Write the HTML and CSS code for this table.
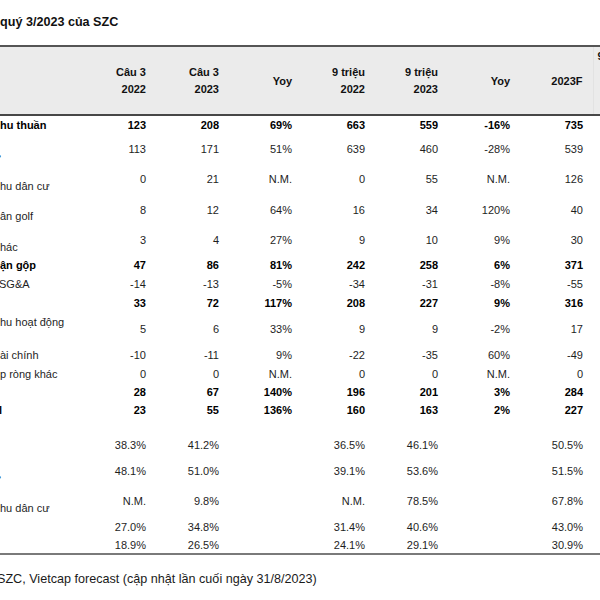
FILE: index.html
```html
<!DOCTYPE html>
<html lang="vi">
<head>
<meta charset="utf-8">
<title>SZC</title>
<link rel="stylesheet" href="styles.css">
</head>
<body>
<div class="page">
  <div class="title">quý 3/2023 của SZC</div>
  <table class="fin">
    <colgroup>
      <col class="c-label"><col class="c-num"><col class="c-num"><col class="c-num"><col class="c-num"><col class="c-num"><col class="c-num6"><col class="c-num"><col class="c-extra">
    </colgroup>
    <thead>
      <tr class="head">
        <th class="lbl"></th>
        <th>Câu 3<br>2022</th>
        <th>Câu 3<br>2023</th>
        <th>Yoy</th>
        <th>9 triệu<br>2022</th>
        <th>9 triệu<br>2023</th>
        <th>Yoy</th>
        <th>2023F</th>
        <th class="extra">9T2023</th>
      </tr>
    </thead>
    <tbody>
      <tr class="h20 b"><td class="lbl">hu thuần</td><td>123</td><td>208</td><td>69%</td><td>663</td><td>559</td><td>-16%</td><td>735</td><td></td></tr>
      <tr class="h29"><td class="lbl low"><span class="tail">•</span></td><td>113</td><td>171</td><td>51%</td><td>639</td><td>460</td><td>-28%</td><td>539</td><td></td></tr>
      <tr class="h31"><td class="lbl low">hu dân cư</td><td>0</td><td>21</td><td>N.M.</td><td>0</td><td>55</td><td>N.M.</td><td>126</td><td></td></tr>
      <tr class="h30"><td class="lbl low">ân golf</td><td>8</td><td>12</td><td>64%</td><td>16</td><td>34</td><td>120%</td><td>40</td><td></td></tr>
      <tr class="h31"><td class="lbl low">hác</td><td>3</td><td>4</td><td>27%</td><td>9</td><td>10</td><td>9%</td><td>30</td><td></td></tr>
      <tr class="h18 b"><td class="lbl">ận gộp</td><td>47</td><td>86</td><td>81%</td><td>242</td><td>258</td><td>6%</td><td>371</td><td></td></tr>
      <tr class="h21"><td class="lbl"><span class="cut1">SG&amp;A</span></td><td>-14</td><td>-13</td><td>-5%</td><td>-34</td><td>-31</td><td>-8%</td><td>-55</td><td></td></tr>
      <tr class="h17 b"><td class="lbl"></td><td>33</td><td>72</td><td>117%</td><td>208</td><td>227</td><td>9%</td><td>316</td><td></td></tr>
      <tr class="h34"><td class="lbl high">hu hoạt động</td><td>5</td><td>6</td><td>33%</td><td>9</td><td>9</td><td>-2%</td><td>17</td><td></td></tr>
      <tr class="h19"><td class="lbl">ài chính</td><td>-10</td><td>-11</td><td>9%</td><td>-22</td><td>-35</td><td>60%</td><td>-49</td><td></td></tr>
      <tr class="h18"><td class="lbl">p ròng khác</td><td>0</td><td>0</td><td>N.M.</td><td>0</td><td>0</td><td>N.M.</td><td>0</td><td></td></tr>
      <tr class="h18 b"><td class="lbl"></td><td>28</td><td>67</td><td>140%</td><td>196</td><td>201</td><td>3%</td><td>284</td><td></td></tr>
      <tr class="h19 b"><td class="lbl"><span class="tailbar">l</span></td><td>23</td><td>55</td><td>136%</td><td>160</td><td>163</td><td>2%</td><td>227</td><td></td></tr>
      <tr class="h14"><td class="lbl"></td><td></td><td></td><td></td><td></td><td></td><td></td><td></td><td></td></tr>
      <tr class="h22"><td class="lbl"></td><td>38.3%</td><td>41.2%</td><td></td><td>36.5%</td><td>46.1%</td><td></td><td>50.5%</td><td></td></tr>
      <tr class="h30"><td class="lbl low"><span class="tail">•</span></td><td>48.1%</td><td>51.0%</td><td></td><td>39.1%</td><td>53.6%</td><td></td><td>51.5%</td><td></td></tr>
      <tr class="h31"><td class="lbl low">hu dân cư</td><td>N.M.</td><td>9.8%</td><td></td><td>N.M.</td><td>78.5%</td><td></td><td>67.8%</td><td></td></tr>
      <tr class="h20"><td class="lbl"></td><td>27.0%</td><td>34.8%</td><td></td><td>31.4%</td><td>40.6%</td><td></td><td>43.0%</td><td></td></tr>
      <tr class="h17 last"><td class="lbl"></td><td>18.9%</td><td>26.5%</td><td></td><td>24.1%</td><td>29.1%</td><td></td><td>30.9%</td><td></td></tr>
    </tbody>
  </table>
  <div class="source"><span class="cut3">SZC, Vietcap forecast (cập nhật lần cuối ngày 31/8/2023)</span></div>
</div>
</body>
</html>
```

FILE: styles.css
```css
html, body {
  margin: 0;
  padding: 0;
  background: #ffffff;
  overflow: hidden;
}

body {
  font-family: "Liberation Sans", Arial, sans-serif;
  color: #1a1a1a;
  width: 600px;
  height: 600px;
}

.page {
  width: 700px;
}

.title {
  font-size: 12.6px;
  font-weight: bold;
  line-height: 16px;
  margin-top: 14px;
  margin-bottom: 15px;
  color: #111;
  white-space: nowrap;
}

.fin {
  border-collapse: collapse;
  table-layout: fixed;
  width: 689px;
  font-size: 11px;
}

.c-label { width: 83px; }
.c-num { width: 73px; }
.c-num6 { width: 72px; }
.c-extra { width: 96px; }

.fin thead tr.head {
  background: #ebebeb;
  height: 69px;
}

.fin thead th {
  border-top: 2px solid #555555;
  border-bottom: 2px solid #474747;
  font-weight: bold;
  text-align: right;
  padding: 1px 10px 0 0;
  line-height: 17px;
  vertical-align: middle;
  color: #111;
  white-space: nowrap;
}

.fin thead th.extra {
  text-align: left;
  vertical-align: top;
  padding: 1px 0 0 4px;
  border-left: 1px solid #e2e2e2;
}

.fin td {
  text-align: right;
  padding: 0 10px 0 0;
  line-height: 13px;
  vertical-align: middle;
  white-space: nowrap;
  color: #1e1e1e;
}

.fin td.lbl,
.fin th.lbl {
  text-align: left;
  padding: 0;
  overflow: hidden;
}

.fin td.lbl.low { padding-top: 13px; }
.fin td.lbl.high { padding-bottom: 14px; }

.fin tr.b td {
  font-weight: bold;
  color: #000;
}

.fin tr.last td {
  border-bottom: 2px solid #7a7a7a;
}

.h14 { height: 14px; }
.h17 { height: 17px; }
.h18 { height: 18px; }
.h19 { height: 19px; }
.h20 { height: 20px; }
.h21 { height: 21px; }
.h22 { height: 22px; }
.h29 { height: 29px; }
.h30 { height: 30px; }
.h31 { height: 31px; }
.h34 { height: 34px; }

.tail {
  display: inline-block;
  margin-left: -3px;
  font-weight: bold;
}

.tailbar {
  display: inline-block;
  margin-left: -1px;
  font-weight: bold;
}

.cut1 {
  display: inline-block;
  margin-left: -1px;
}

.source {
  margin-top: 16px;
  font-size: 12.6px;
  line-height: 16px;
  color: #1a1a1a;
  white-space: nowrap;
}

.cut3 {
  display: inline-block;
  margin-left: -3px;
}
```
